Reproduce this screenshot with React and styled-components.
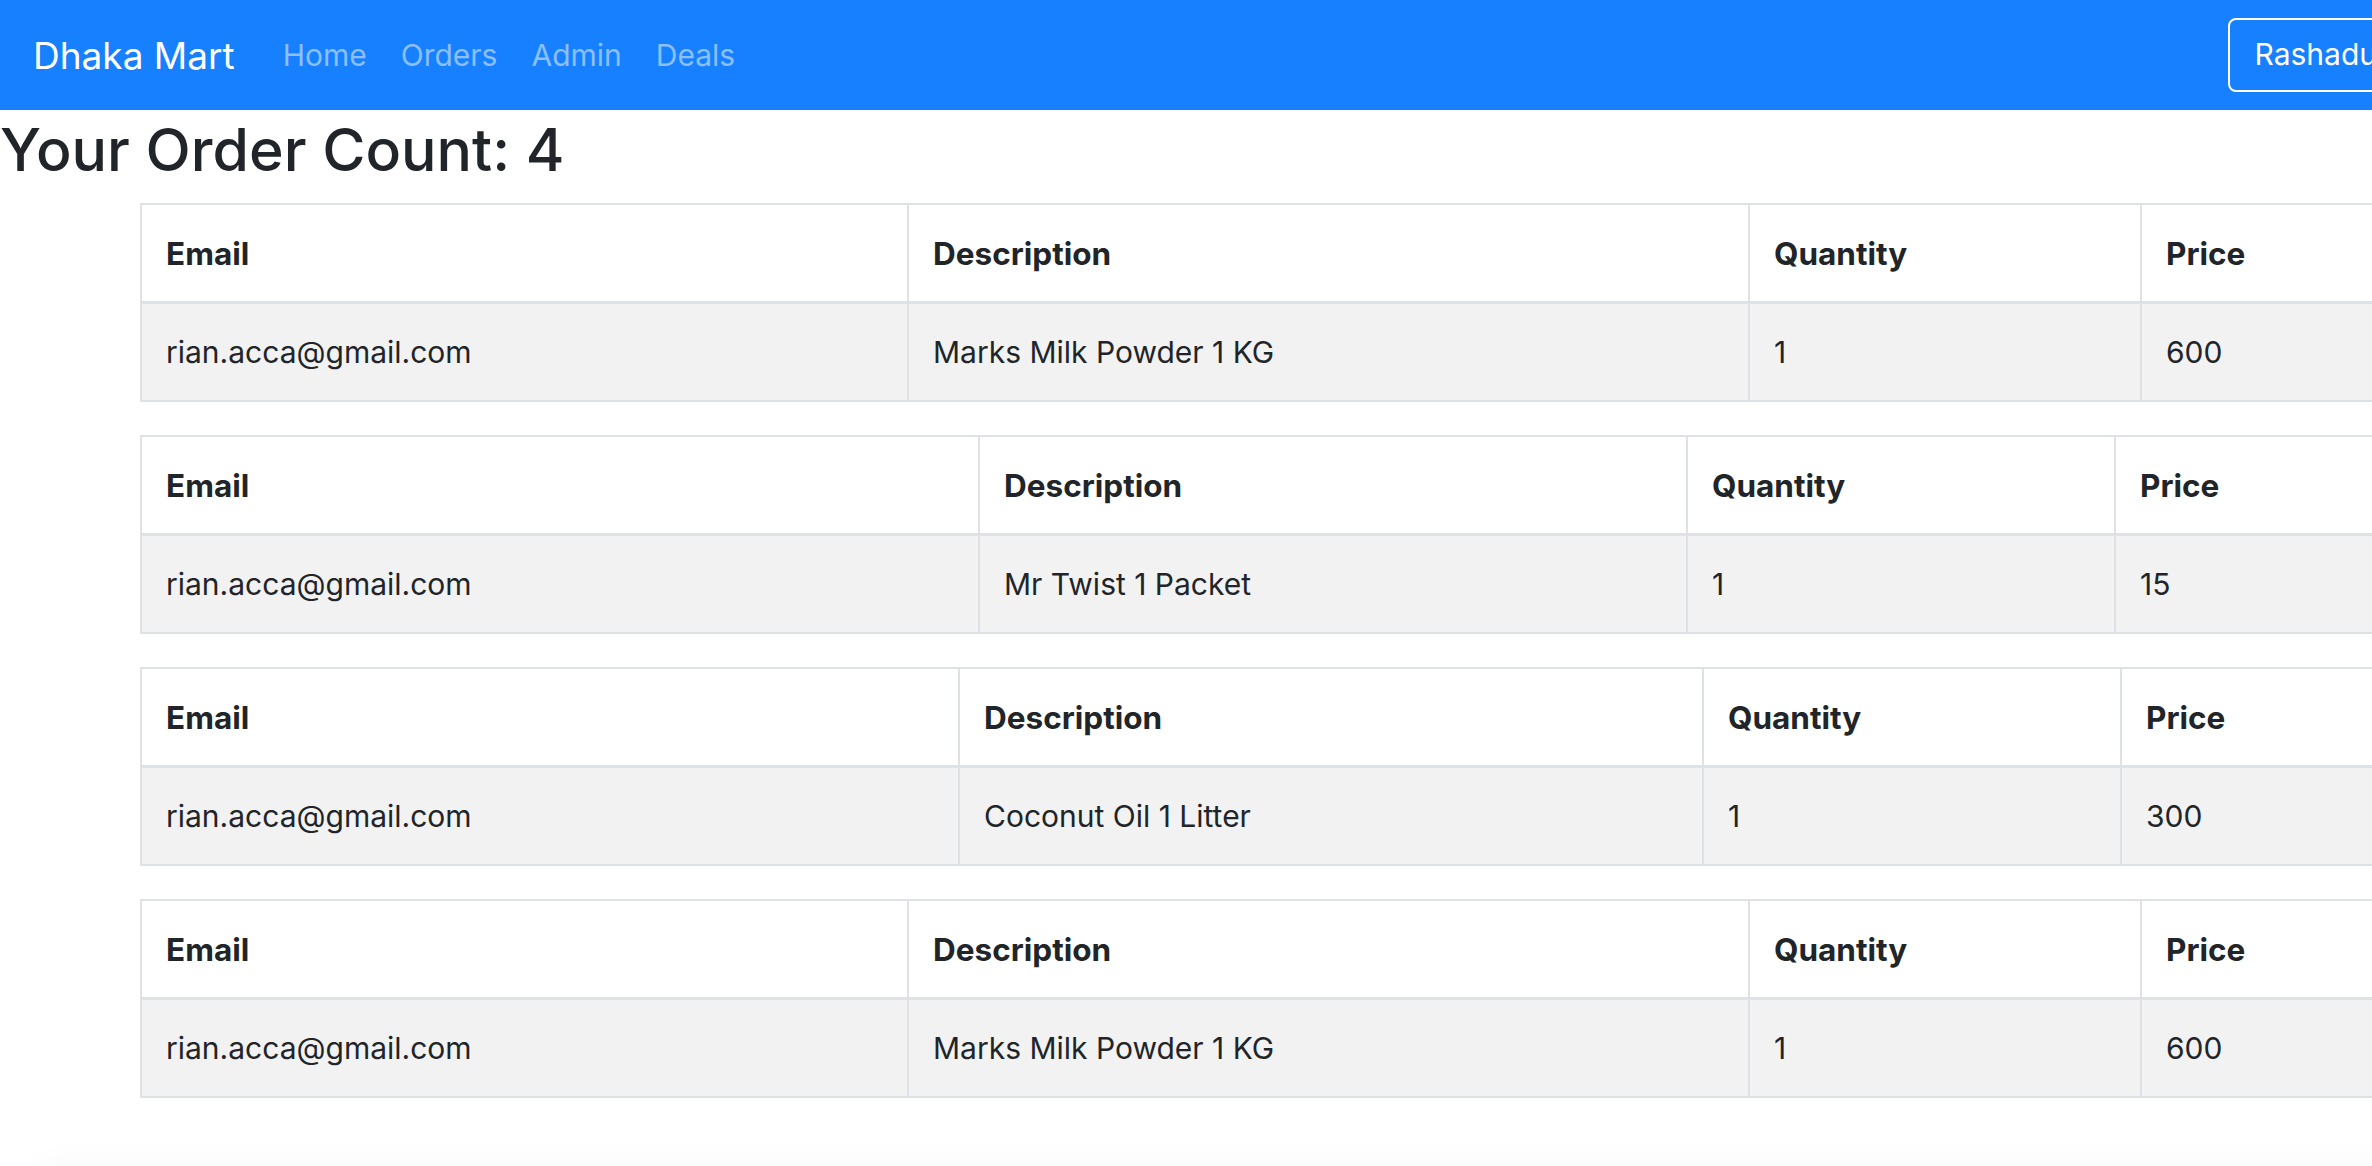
import React from 'react';
import styled, { createGlobalStyle } from 'styled-components';

const GlobalStyle = createGlobalStyle`
  html, body {
    margin: 0;
    padding: 0;
    overflow: hidden;
    background: #fff;
  }
  body {
    font-family: "Inter", "Liberation Sans", sans-serif;
    color: #212529;
  }
  * {
    box-sizing: border-box;
  }
`;

const Page = styled.div`
  width: 2517px;
  min-height: 1166px;
`;

const Navbar = styled.nav`
  display: flex;
  align-items: center;
  height: 110px;
  padding: 0 24px 0 33px;
  background-color: #1780fe;
`;

const Brand = styled.a`
  font-size: 37px;
  color: #fff;
  text-decoration: none;
  margin-right: 48px;
  white-space: nowrap;
`;

const NavLinks = styled.div`
  display: flex;
  align-items: center;
  gap: 34px;
  flex: 1;
`;

const NavLink = styled.a`
  font-size: 30px;
  color: rgba(255, 255, 255, 0.5);
  text-decoration: none;
  white-space: nowrap;
`;

const UserButton = styled.button`
  font-family: inherit;
  font-size: 30px;
  line-height: 45px;
  padding: 12px 24px 13px;
  color: #fff;
  background: transparent;
  border: 2px solid #fff;
  border-radius: 8px;
  white-space: nowrap;
  cursor: pointer;
`;

const Heading = styled.h1`
  margin: 0;
  font-size: 59px;
  font-weight: 500;
  line-height: 80px;
  color: #212529;
`;

const TableList = styled.div`
  margin: 13px 0 0 140px;
  display: flex;
  flex-direction: column;
  gap: 33px;
`;

const Table = styled.table`
  width: 2240px;
  table-layout: fixed;
  border-collapse: collapse;
  font-size: 30px;
  line-height: 45px;
`;

const Col = styled.col`
  width: ${props => props.$w}px;
`;

const HeadCell = styled.th`
  text-align: left;
  font-size: 31.5px;
  font-weight: 700;
  padding: 26px 24px 25px;
  background: #fff;
  border: 2px solid #dee2e6;
  border-bottom-width: 3px;
  white-space: nowrap;
`;

const BodyCell = styled.td`
  padding: 26px 24px 25px;
  background: #f2f2f2;
  border: 2px solid #dee2e6;
  white-space: nowrap;
`;

const Footer = styled.div`
  margin: 70px 0 0 40px;
  height: 200px;
  background: #fff;
  box-shadow: 0 -8px 30px rgba(0, 0, 0, 0.025);
`;

const orders = [
  { email: 'rian.acca@gmail.com', description: 'Marks Milk Powder 1 KG', quantity: 1, price: 600, cols: [767, 841, 392] },
  { email: 'rian.acca@gmail.com', description: 'Mr Twist 1 Packet', quantity: 1, price: 15, cols: [838, 708, 428] },
  { email: 'rian.acca@gmail.com', description: 'Coconut Oil 1 Litter', quantity: 1, price: 300, cols: [818, 744, 418] },
  { email: 'rian.acca@gmail.com', description: 'Marks Milk Powder 1 KG', quantity: 1, price: 600, cols: [767, 841, 392] },
];

const App = () => {
  return (
    <Page>
      <GlobalStyle />
      <Navbar>
        <Brand href="#">Dhaka Mart</Brand>
        <NavLinks>
          <NavLink href="#">Home</NavLink>
          <NavLink href="#">Orders</NavLink>
          <NavLink href="#">Admin</NavLink>
          <NavLink href="#">Deals</NavLink>
        </NavLinks>
        <UserButton>Rashadul Islam</UserButton>
      </Navbar>

      <Heading>Your Order Count: {orders.length}</Heading>

      <TableList>
        {orders.map((order, index) => (
          <Table key={index}>
            <colgroup>
              {order.cols.map((w, i) => (
                <Col key={i} $w={w} />
              ))}
              <col />
            </colgroup>
            <thead>
              <tr>
                <HeadCell>Email</HeadCell>
                <HeadCell>Description</HeadCell>
                <HeadCell>Quantity</HeadCell>
                <HeadCell>Price</HeadCell>
              </tr>
            </thead>
            <tbody>
              <tr>
                <BodyCell>{order.email}</BodyCell>
                <BodyCell>{order.description}</BodyCell>
                <BodyCell>{order.quantity}</BodyCell>
                <BodyCell>{order.price}</BodyCell>
              </tr>
            </tbody>
          </Table>
        ))}
      </TableList>

      <Footer />
    </Page>
  );
};

export default App;
